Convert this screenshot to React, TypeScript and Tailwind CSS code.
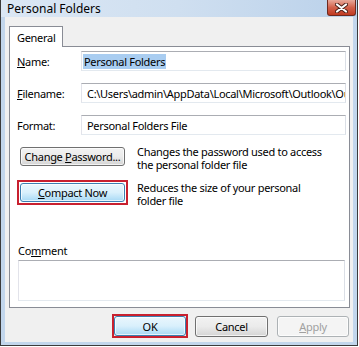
import React from 'react';

const font = "font-['Segoe_UI','Noto_Sans',sans-serif]";

const Btn: React.FC<{ children: React.ReactNode; hot?: boolean; disabled?: boolean; className?: string }> = ({
  children,
  hot,
  disabled,
  className = '',
}) => {
  let look =
    'border-[#707070] bg-linear-to-b from-[#f2f2f2] via-[#ebebeb] to-[#d4d4d4] text-black';
  if (hot) look = 'border-[#3c7fb1] bg-linear-to-b from-[#eaf6fd] via-[#d9f0fc] to-[#a7d9f5] text-black';
  if (disabled) look = 'border-[#adb2b5] bg-[#f4f4f4] text-[#a0a0a0]';
  return (
    <div
      className={`flex items-center justify-center rounded-[3px] border text-[11px] leading-none shadow-[inset_0_0_0_1px_rgba(255,255,255,0.7)] ${look} ${className}`}
    >
      {children}
    </div>
  );
};

const Field: React.FC<{ label: React.ReactNode; children: React.ReactNode; first?: boolean }> = ({
  label,
  children,
  first,
}) => (
  <div className={`flex h-[20px] items-center ${first ? '' : 'mt-[12px]'}`}>
    <div className="w-[64px] text-[11px] leading-none">{label}</div>
    <div className="flex h-full flex-1 items-center overflow-hidden whitespace-nowrap border border-[#abadb3] border-r-[#dbdfe6] border-b-[#e3e9ef] border-l-[#e2e3ea] bg-white text-[11px]">
      {children}
    </div>
  </div>
);

export default function App() {
  return (
    <div className={`h-[347px] w-[359px] overflow-hidden bg-white tracking-[-0.3px] text-black ${font}`}>
      <div className="flex h-[346px] w-[358px] flex-col border-x border-b border-[#3b3b3b] bg-[#c2d6ec]">
        {/* title bar */}
        <div className="flex h-[17px] shrink-0 items-center bg-linear-to-r from-[#dbe7f4] via-[#cfdff0] to-[#bad1ea] pl-[6px]">
          <span className="text-[12px] leading-none tracking-normal">Personal Folders</span>
          <div className="ml-auto mr-[1px] flex h-[16px] w-[29px] items-center justify-center self-start rounded-b-[3px] border border-t-0 border-[#6d2a1f] bg-linear-to-b from-[#e8a99b] via-[#d2604a] to-[#c0391f]">
            <svg width="13" height="10" viewBox="0 0 13 10">
              <path d="M2 1.5 L11 8.5 M11 1.5 L2 8.5" stroke="#4a2018" strokeWidth="4" strokeLinecap="round" />
              <path d="M2 1.5 L11 8.5 M11 1.5 L2 8.5" stroke="#ffffff" strokeWidth="2.2" strokeLinecap="round" />
            </svg>
          </div>
        </div>

        {/* window body */}
        <div className="mx-[4px] mb-[3px] flex flex-1 flex-col bg-[#f0f0f0] pl-[4px] pr-[3px] pt-[9px]">
          {/* tab header */}
          <div className="flex">
            <div className="relative z-10 -mb-px flex h-[21px] w-[54px] items-center border border-b-0 border-[#898c95] bg-white pl-[7px] text-[11px] leading-none">
              General
            </div>
          </div>

          {/* tab panel */}
          <div className="flex h-[262px] flex-col border border-[#898c95] bg-white pb-[6px] pl-[7px] pr-[3px] pt-[4px]">
            <Field
              first
              label={
                <>
                  <span className="underline">N</span>ame:
                </>
              }
            >
              <span className="ml-px bg-[#a9cdf1] px-px py-[2px] leading-none">Personal Folders</span>
            </Field>
            <Field
              label={
                <>
                  <span className="underline">F</span>ilename:
                </>
              }
            >
              <span className="pl-[5px] leading-none">C:\Users\admin\AppData\Local\Microsoft\Outlook\Outlook.pst</span>
            </Field>
            <Field label="Format:">
              <span className="pl-[5px] leading-none">Personal Folders File</span>
            </Field>

            <div className="mt-[9px] flex items-start">
              <div className="h-[25px] w-[111px] shrink-0 border-[3px] border-transparent">
                <Btn className="h-full w-full">
                  Change&nbsp;<span className="underline">P</span>assword...
                </Btn>
              </div>
              <div className="ml-[9px] flex flex-col pt-[1px] text-[11px] leading-[13px]">
                <span>Changes the password used to access</span>
                <span>the personal folder file</span>
              </div>
            </div>

            <div className="mt-[9px] flex items-start">
              <div className="h-[25px] w-[111px] shrink-0 border-[2px] border-[#c8202f] p-px">
                <Btn hot className="h-full w-full">
                  <span className="underline">C</span>ompact Now
                </Btn>
              </div>
              <div className="ml-[9px] flex flex-col pt-px text-[11px] leading-[13px]">
                <span>Reduces the size of your personal</span>
                <span>folder file</span>
              </div>
            </div>

            <div className="mt-auto ml-px text-[11px] leading-[14px]">
              Co<span className="underline">m</span>ment
            </div>
            <div className="ml-px mr-px mt-[2px] h-[41px] border border-[#abadb3] border-b-[#e3e9ef] border-l-[#e2e3ea] border-r-[#dbdfe6] bg-white" />
          </div>

          {/* dialog buttons */}
          <div className="mt-[6px] flex h-[24px] items-center justify-end pr-px">
            <div className="h-[24px] w-[76px] border-[2px] border-[#c8202f]">
              <Btn hot className="h-full w-full">
                OK
              </Btn>
            </div>
            <Btn className="ml-[7px] h-[21px] w-[73px]">Cancel</Btn>
            <Btn disabled className="ml-[9px] h-[21px] w-[72px]">
              <span className="underline">A</span>pply
            </Btn>
          </div>
        </div>
      </div>
    </div>
  );
}
